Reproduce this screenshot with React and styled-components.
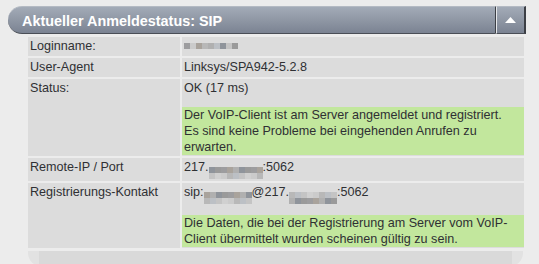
import React from 'react';
import styled, { createGlobalStyle } from 'styled-components';

const GlobalStyle = createGlobalStyle`
  body {
    margin: 0;
    background: #ececec;
    font-family: "Liberation Sans", Arial, sans-serif;
  }
`;

const Panel = styled.div`
  width: 518px;
  padding: 6px 0 0 8px;
`;

const Header = styled.div`
  display: flex;
  height: 28px;
`;

const Title = styled.div`
  flex: 1;
  display: flex;
  align-items: center;
  padding: 1px 0 0 14px;
  border-radius: 14px 0 0 14px;
  border-top: 1px solid #b4bac3;
  border-right: 1px solid #3c3f45;
  border-bottom: 1px solid #4a4e56;
  background: linear-gradient(#a3abb7, #7b8392);
  color: #fff;
  font-weight: bold;
  font-size: 14.4px;
`;

const ToggleButton = styled.div`
  width: 27px;
  display: flex;
  align-items: center;
  justify-content: center;
  border-top: 1px solid #b4bac3;
  border-left: 1px solid #e6e8eb;
  border-right: 2px solid #3c3f45;
  border-bottom: 1px solid #4a4e56;
  background: linear-gradient(#a3abb7, #7b8392);
`;

const Body = styled.div`
  padding: 3px 2px 0 20px;
`;

const Grid = styled.div`
  display: grid;
  grid-template-columns: 152px 1fr;
  gap: 2px;
`;

const Cell = styled.div`
  background: #dcdcdc;
  padding: 1px 2px 2px;
  font-size: 12.6px;
  line-height: 16px;
  color: #2f3033;
`;

const Note = styled.div`
  margin: 11px -2px -1px -2px;
  padding: 0 2px;
  background: #c2e79d;
`;

const Mosaic = styled.span`
  display: inline-grid;
  grid-auto-flow: column;
  grid-template-rows: repeat(${(p) => p.$rows}, 6px);
  vertical-align: ${(p) => (p.$rows > 1 ? '-2px' : '1px')};
`;

const Block = styled.span`
  width: 6px;
  height: 6px;
  background: ${(p) => p.$shade};
`;

const Footer = styled.div`
  margin: 3px 1px 0 0;
  height: 15px;
  border-radius: 0 0 13px 13px;
  background: #e2e2e2;
  padding: 0 11px;
`;

const FooterBar = styled.div`
  height: 100%;
  background: #d9d9d9;
`;

const shades = ['#c4c4c4', '#9d9d9f', '#b8b8b8', '#8f949b', '#d0d0d0', '#a9a39c', '#bcc0c5', '#9a9a9a', '#cbcbcb', '#b0b0b0'];

function Pixelated({ width, rows = 1, seed = 0 }) {
  const count = Math.round(width / 6) * rows;
  return (
    <Mosaic $rows={rows}>
      {Array.from({ length: count }, (_, i) => (
        <Block key={i} $shade={shades[(i * 7 + seed) % shades.length]} />
      ))}
    </Mosaic>
  );
}

export default function App() {
  return (
    <>
      <GlobalStyle />
      <Panel>
        <Header>
          <Title>Aktueller Anmeldestatus: SIP</Title>
          <ToggleButton>
            <svg width="11" height="6" viewBox="0 0 11 6">
              <path d="M5.5 0 L11 6 L0 6 Z" fill="#fff" />
            </svg>
          </ToggleButton>
        </Header>
        <Body>
          <Grid>
            <Cell>Loginname:</Cell>
            <Cell>
              <Pixelated width={52} seed={1} />
            </Cell>
            <Cell>User-Agent</Cell>
            <Cell>Linksys/SPA942-5.2.8</Cell>
            <Cell>Status:</Cell>
            <Cell>
              OK (17 ms)
              <Note>
                Der VoIP-Client ist am Server angemeldet und registriert.
                <br />
                Es sind keine Probleme bei eingehenden Anrufen zu
                <br />
                erwarten.
              </Note>
            </Cell>
            <Cell>Remote-IP / Port</Cell>
            <Cell>
              217.<Pixelated width={52} rows={2} seed={3} />:5062
            </Cell>
            <Cell>Registrierungs-Kontakt</Cell>
            <Cell>
              sip:<Pixelated width={48} rows={2} seed={5} />@217.<Pixelated width={50} rows={2} seed={2} />:5062
              <Note>
                Die Daten, die bei der Registrierung am Server vom VoIP-
                <br />
                Client übermittelt wurden scheinen gültig zu sein.
              </Note>
            </Cell>
          </Grid>
          <Footer>
            <FooterBar />
          </Footer>
        </Body>
      </Panel>
    </>
  );
}
